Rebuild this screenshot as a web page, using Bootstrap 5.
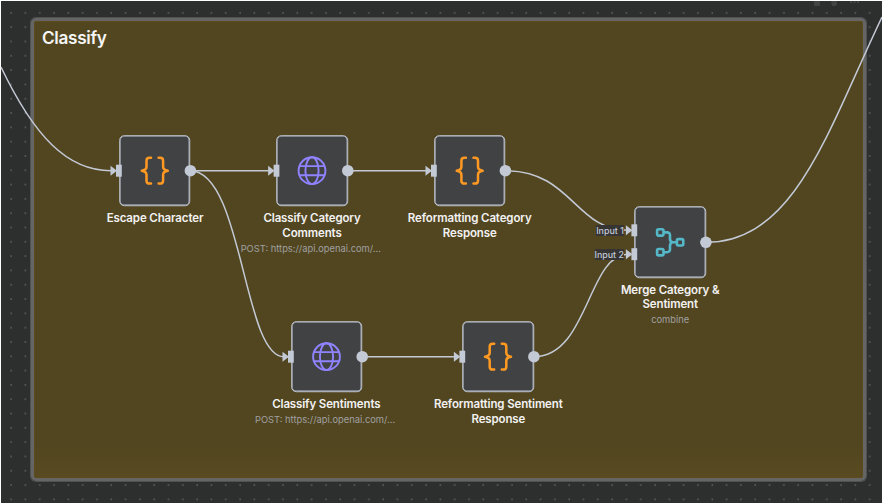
<!DOCTYPE html>
<html lang="en">
<head>
<meta charset="utf-8">
<meta name="viewport" content="width=device-width, initial-scale=1">
<title>Classify workflow</title>
<link href="https://cdn.jsdelivr.net/npm/bootstrap@5.3.0/dist/css/bootstrap.min.css" rel="stylesheet">
<style>
body{background:#fff;font-family:Inter,"Liberation Sans",sans-serif;}
.flow-canvas{width:882px;height:504px;background:#fff;}
.flow-bg{left:1px;top:1px;width:881px;height:502px;background:#2d2e2e;}
.sticky{left:31px;top:18px;width:835px;height:463px;border:3px solid #656565;border-radius:5px;background:linear-gradient(#524620 0,#524620 93%,#594a20 100%);box-shadow:inset 0 0 0 1px #5c4c1d,0 0 0 1px #505151;}
.sticky h1{font-size:17.2px;font-weight:600;letter-spacing:-.33px;color:#f5f5f5;line-height:22px;margin:6px 0 0 8px;}
.wires{left:0;top:0;}
.flow-node{width:71.6px;height:71.6px;background:#414244;border:1px solid #c3c9d5;border-radius:5px;box-shadow:inset 0 0 0 .6px #c3c9d5;transform:translate(-50%,-50%);}
.flow-label{width:150px;transform:translateX(-50%);font-size:11.5px;font-weight:600;letter-spacing:-.13px;line-height:14.7px;color:#f2f2f2;}
.flow-sub{font-size:9.35px;font-weight:400;letter-spacing:0;line-height:12px;color:#a0a0a0;margin-top:2px;white-space:nowrap;}
.n1{left:154.8px;top:170.7px}.n2{left:312px;top:170.7px}.n3{left:469.7px;top:170.7px}
.n4{left:670.2px;top:242.3px}.n5{left:326.5px;top:356.7px}.n6{left:498px;top:356.7px}
.l1{left:155px;top:211px}.l2{left:312px;top:211px}.l3{left:469.7px;top:211px}
.l4{left:670.2px;top:283px;line-height:14.2px}.l5{left:326.3px;top:397px}.l6{left:498.3px;top:397px}
.l2 .flow-sub{margin-left:-2.5px;margin-top:3px}
.l4 .flow-sub{margin-top:3px}
.l5 .flow-sub{margin-left:-2.5px}
.port-tag{font-size:8.9px;font-weight:500;line-height:11px;height:11px;color:#c3c9d5;background:#363533;white-space:nowrap;}
.t1{left:596px;top:225px;width:28px}.t2{left:594.5px;top:249px;width:29px}
</style>
<script src="https://cdn.jsdelivr.net/npm/bootstrap@5.3.0/dist/js/bootstrap.bundle.min.js"></script>
</head>
<body class="m-0 overflow-hidden">
<svg width="0" height="0" class="position-absolute">
  <defs>
    <g id="braces" fill="none" stroke="#ff9922" stroke-width="2.5" stroke-linejoin="round" stroke-linecap="round">
      <path d="M-3.800-12.900H-5.400Q-8.300-12.900-8.300-10V-4Q-8.300-.8-13 0Q-8.300 .8-8.300 4V10Q-8.300 12.900-5.400 12.900H-3.800"/>
      <path d="M3.800-12.900H5.400Q8.300-12.900 8.300-10V-4Q8.300-.8 13 0Q8.300 .8 8.300 4V10Q8.300 12.900 5.400 12.900H3.800"/>
    </g>
    <g id="globe" fill="none" stroke="#9083ff" stroke-width="1.9">
      <circle r="13.4"/><ellipse rx="6.600" ry="13.400"/><path d="M-12.500-4.600H12.500M-12.500 4.600H12.500"/>
    </g>
    <g id="merge" fill="none" stroke="#54b8c9" stroke-width="2.600">
      <rect x="-13.100" y="-13.100" width="6.400" height="6.400" rx="1.500"/><rect x="-13.100" y="6.700" width="6.400" height="6.400" rx="1.500"/><rect x="6.700" y="-3.200" width="6.400" height="6.400" rx="1.500"/>
      <path d="M-6.700-9.900H-3.200Q-.2-9.900-.2-6.900V-3.400Q-.2 0 3 0H6.700M-6.700 9.900H-3.200Q-.2 9.900-.2 6.900V3.400Q-.2 0 3 0"/>
    </g>
    <g id="inlet" fill="#c3c9d5"><path d="M-8.500-5L-2 0L-8.500 5Z"/><rect x="-3" y="-6" width="5.800" height="12"/></g>
  </defs>
</svg>
<main class="flow-canvas position-relative overflow-hidden">
  <svg class="flow-bg position-absolute" aria-hidden="true">
    <defs><pattern id="dots" x="9" y="10.900" width="14.310" height="14.310" patternUnits="userSpaceOnUse"><rect x=".4" y=".4" width="1.500" height="1.100" fill="#747575"/></pattern></defs>
    <rect width="881" height="502" fill="url(#dots)"/>
    <g fill="#424343"><rect x="813" y="0" width="6" height="5" rx="1"/><path d="M830 0h6v4l-2 1h-3zM849 0h2v2h-2zM852.500 0h2v2h-2zM856 0h2v2h-2z"/></g>
  </svg>
  <section class="sticky position-absolute"><h1>Classify</h1></section>
  <svg class="wires position-absolute" width="882" height="504" fill="none" stroke="#c3c9d5" stroke-width="1.500">
    <path d="M1 67C34 136 67 170.700 111 170.700"/>
    <path d="M190 170.700H270M347 170.700H428M362 356.700H456"/>
    <path d="M190 170.700C243 170.700 243 356.700 284 356.700"/>
    <path d="M505 170.700C572 170.700 575 230.300 628 230.300"/>
    <path d="M534 356.700C588 356.700 588 254.200 628 254.200"/>
    <path d="M706 242.300C795 242.300 828 130 882 17"/>
  </svg>
  <div class="flow-node position-absolute n1"></div><div class="flow-node position-absolute n2"></div><div class="flow-node position-absolute n3"></div>
  <div class="flow-node position-absolute n4"></div><div class="flow-node position-absolute n5"></div><div class="flow-node position-absolute n6"></div>
  <div class="port-tag position-absolute text-center t1">Input 1</div>
  <div class="port-tag position-absolute text-center t2">Input 2</div>
  <svg class="wires position-absolute" width="882" height="504">
    <use href="#braces" x="154.800" y="170.700"/><use href="#globe" x="312" y="170.700"/><use href="#braces" x="469.700" y="170.700"/>
    <use href="#merge" x="670.200" y="242.300"/><use href="#globe" x="326.500" y="356.700"/><use href="#braces" x="498" y="356.700"/>
    <use href="#inlet" x="119" y="170.700"/><use href="#inlet" x="276.600" y="170.700"/><use href="#inlet" x="434" y="170.700"/>
    <use href="#inlet" x="634.400" y="230.300"/><use href="#inlet" x="634.400" y="254.200"/><use href="#inlet" x="291" y="356.700"/><use href="#inlet" x="462.400" y="356.700"/>
    <g fill="#c3c9d5"><circle cx="190.400" cy="170.700" r="5.800"/><circle cx="347.800" cy="170.700" r="5.800"/><circle cx="505.400" cy="170.700" r="5.800"/><circle cx="705.900" cy="242.300" r="5.800"/><circle cx="362.200" cy="356.700" r="5.800"/><circle cx="533.900" cy="356.700" r="5.800"/></g>
  </svg>
  <div class="flow-label position-absolute text-center l1">Escape Character</div>
  <div class="flow-label position-absolute text-center l2">Classify Category<br>Comments<div class="flow-sub">POST: https://api.openai.com/...</div></div>
  <div class="flow-label position-absolute text-center l3">Reformatting Category<br>Response</div>
  <div class="flow-label position-absolute text-center l4">Merge Category &amp;<br>Sentiment<div class="flow-sub">combine</div></div>
  <div class="flow-label position-absolute text-center l5">Classify Sentiments<div class="flow-sub">POST: https://api.openai.com/...</div></div>
  <div class="flow-label position-absolute text-center l6">Reformatting Sentiment<br>Response</div>
</main>
</body>
</html>
